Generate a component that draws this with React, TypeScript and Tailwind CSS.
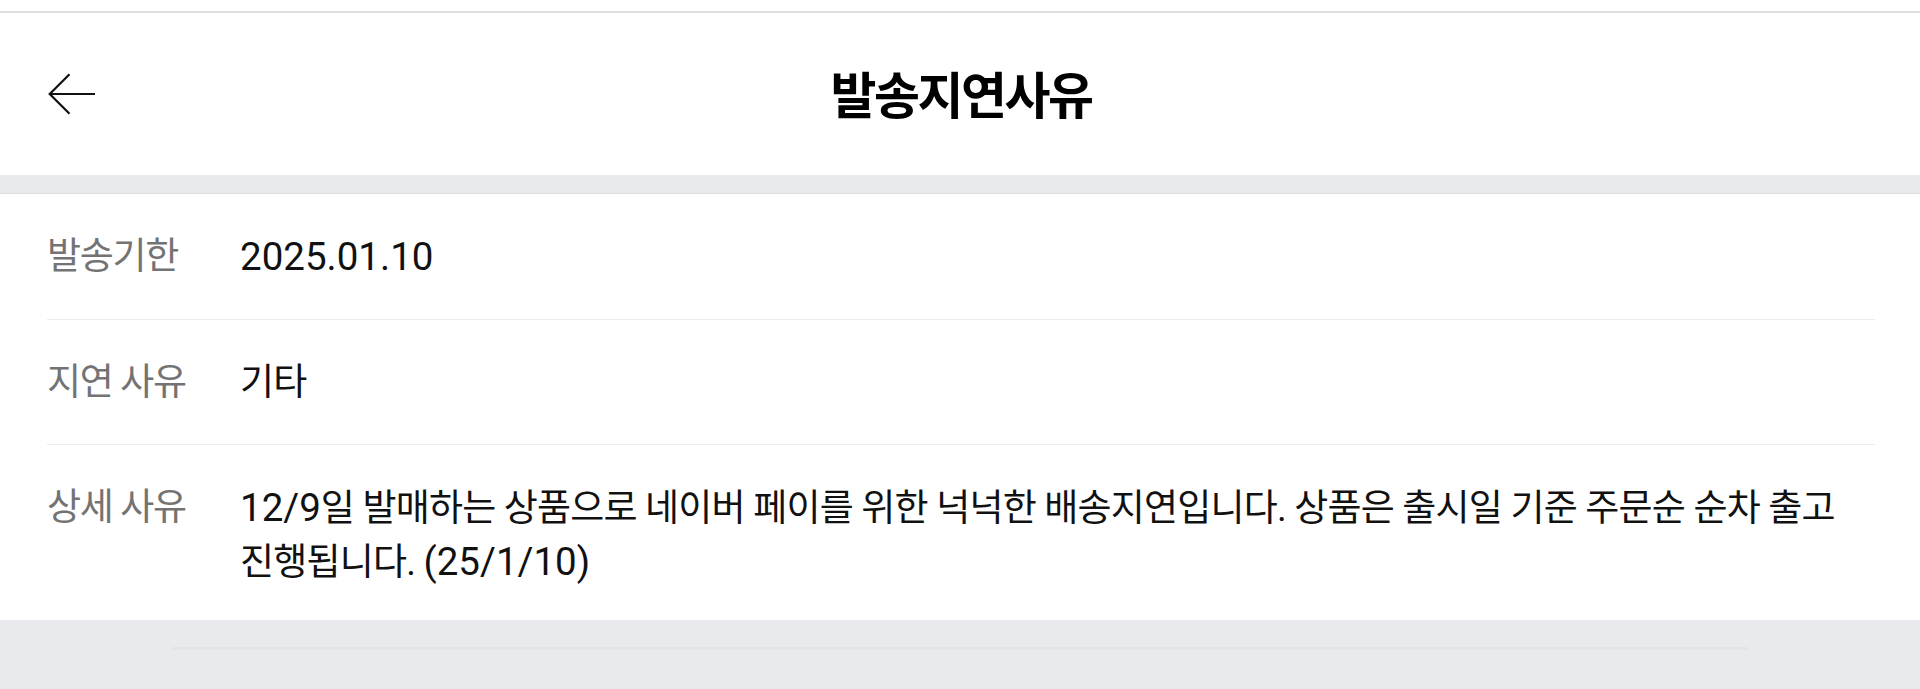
import React from "react";

const FONT = "font-['Roboto','Noto_Sans_CJK_KR',sans-serif]";

function Row({
  label,
  children,
  last,
}: {
  label: string;
  children: React.ReactNode;
  last?: boolean;
}) {
  return (
    <div
      className={
        "flex pt-[36px] " +
        (last ? "pb-[31px]" : "pb-[35px] border-b border-[#ececec]")
      }
    >
      <div className="w-[193px] shrink-0 text-[37px] leading-[53px] tracking-[-1.3px] text-[#737373] whitespace-nowrap">
        {label}
      </div>
      <div className="flex-1 min-w-0 text-[37px] leading-[53px] tracking-[-0.8px] text-[#111111] break-keep">
        {children}
      </div>
    </div>
  );
}

function Num({ children }: { children: React.ReactNode }) {
  return <span className="text-[38.5px] leading-[53px] tracking-normal">{children}</span>;
}

export default function App() {
  return (
    <div className={"w-[1920px] h-[689px] overflow-hidden bg-[#e9eaed] " + FONT}>
      <div className="h-[11px] bg-white" />
      <div className="h-[2px] bg-[#dedfe0]" />
      <header className="h-[162px] bg-white grid grid-cols-[1fr_auto_1fr] items-center">
        <div className="pl-[48px] flex items-center">
          <svg width="48" height="42" viewBox="0 0 48 42" fill="none">
            <path
              d="M47 21H2M21.5 1.2L1.7 21L21.5 40.8"
              stroke="#111"
              strokeWidth="2.2"
              strokeLinejoin="miter"
            />
          </svg>
        </div>
        <h1 className="text-[50px] font-bold tracking-[-2.5px] text-black leading-none pl-[2px] pt-[6px]">
          발송지연사유
        </h1>
        <div />
      </header>
      <div className="h-[18px] bg-[#e9eaed]" />
      <div className="h-[1px] bg-[#dcdde1]" />
      <section className="bg-white pl-[47px] pr-[45px]">
        <Row label="발송기한">
          <Num>2025.01.10</Num>
        </Row>
        <Row label="지연 사유">기타</Row>
        <Row label="상세 사유" last>
          <Num>12/9</Num>일 발매하는 상품으로 네이버 페이를 위한 넉넉한 배송지연입니다. 상품은 출시일 기준
          주문순 순차 출고 진행됩니다. <Num>(25/1/10)</Num>
        </Row>
      </section>
      <div className="pt-[27px] pl-[172px] pr-[172px]">
        <div className="h-[3px] bg-[#e3e4e7]" />
      </div>
    </div>
  );
}
